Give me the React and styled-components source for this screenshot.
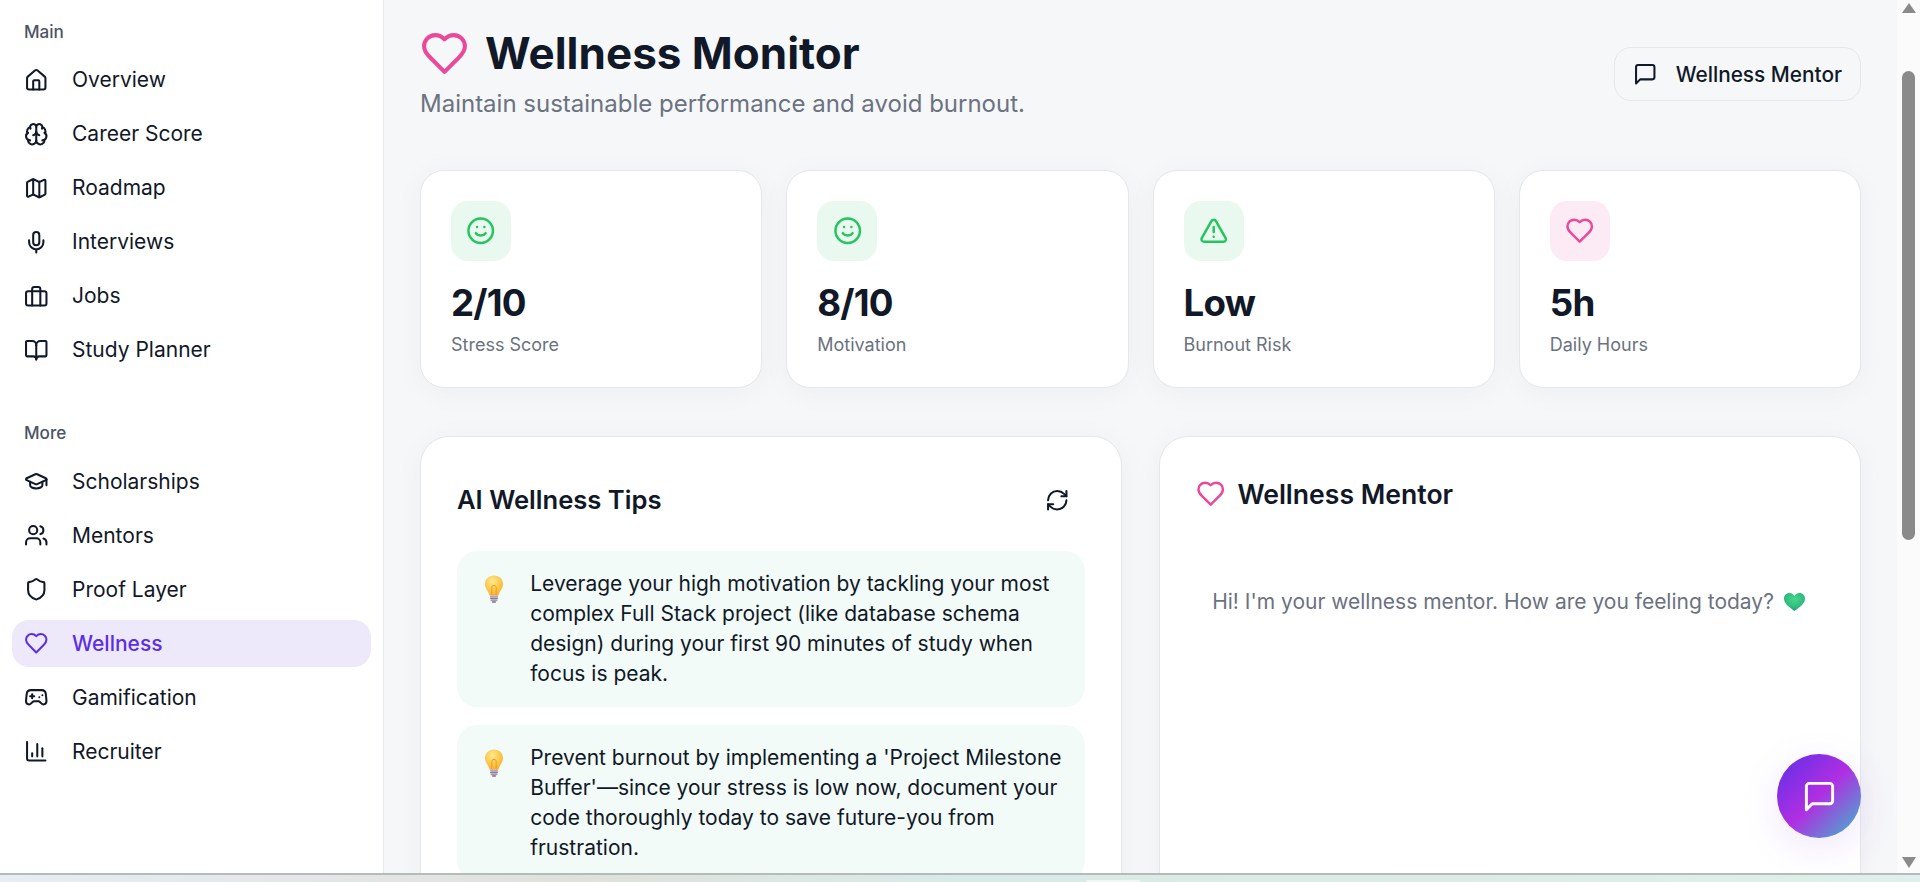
import styled, { createGlobalStyle } from "styled-components";
import {
  House,
  Brain,
  Map,
  Mic,
  BookOpen,
  GraduationCap,
  Users,
  Shield,
  Gamepad2,
  ChartColumn,
  Smile,
  TriangleAlert,
  RefreshCw,
} from "lucide-react";

const GlobalStyle = createGlobalStyle`
  html, body {
    margin: 0;
    padding: 0;
    height: 100%;
    overflow: hidden;
    background: #f6f7f9;
    font-family: "Inter", "Liberation Sans", sans-serif;
    color: #111827;
  }
  * { box-sizing: border-box; }
`;

// older lucide outlines, the package versions of these differ from the picture
const Heart = ({ size = 24, strokeWidth = 2 }) => (
  <svg width={size} height={size} viewBox="0 0 24 24" fill="none" stroke="currentColor" strokeWidth={strokeWidth} strokeLinecap="round" strokeLinejoin="round">
    <path d="M19 14c1.49-1.46 3-3.21 3-5.5A5.5 5.5 0 0 0 16.5 3c-1.76 0-3 .5-4.5 2-1.5-1.5-2.74-2-4.5-2A5.5 5.5 0 0 0 2 8.5c0 2.3 1.5 4.05 3 5.5l7 7Z" />
  </svg>
);

const Bubble = ({ size = 24 }) => (
  <svg width={size} height={size} viewBox="0 0 24 24" fill="none" stroke="currentColor" strokeWidth="2" strokeLinecap="round" strokeLinejoin="round">
    <path d="M21 15a2 2 0 0 1-2 2H7l-4 4V5a2 2 0 0 1 2-2h14a2 2 0 0 1 2 2z" />
  </svg>
);

const Briefcase = ({ size = 24 }) => (
  <svg width={size} height={size} viewBox="0 0 24 24" fill="none" stroke="currentColor" strokeWidth="2" strokeLinecap="round" strokeLinejoin="round">
    <rect x="2" y="7" width="20" height="14" rx="2" />
    <path d="M16 21V5a2 2 0 0 0-2-2h-4a2 2 0 0 0-2 2v16" />
  </svg>
);

const Bulb = () => (
  <svg width="20" height="28" viewBox="0 0 20 28">
    <defs>
      <radialGradient id="bulbGlass" cx="0.42" cy="0.3" r="0.75">
        <stop offset="0" stopColor="#ffe98a" />
        <stop offset="1" stopColor="#f9ae22" />
      </radialGradient>
    </defs>
    <path d="M10 0.500C4.800 0.500 1 4.300 1 9.200c0 4.300 3.400 6.500 4.600 11.300h8.800c1.200-4.800 4.600-7 4.600-11.300C19 4.300 15.200 0.500 10 0.500Z" fill="url(#bulbGlass)" />
    <path d="M7.800 20V12.500a2.200 2.200 0 0 1 4.400 0V20" fill="none" stroke="#ee9f1e" strokeWidth="1" />
    <rect x="6" y="20.500" width="8" height="1.800" rx="0.800" fill="#b3a3bd" />
    <rect x="6" y="22.600" width="8" height="1.800" rx="0.800" fill="#8f7d9c" />
    <rect x="6.500" y="24.700" width="7" height="1.600" rx="0.800" fill="#a999b3" />
    <rect x="8" y="26.300" width="4" height="1.500" rx="0.700" fill="#7d6c8a" />
  </svg>
);

const GreenHeart = () => (
  <svg width="21" height="18" viewBox="0 0 21 18">
    <defs>
      <radialGradient id="greenHeart" cx="0.5" cy="0.35" r="0.7">
        <stop offset="0" stopColor="#46d68c" />
        <stop offset="0.6" stopColor="#2fbf7c" />
        <stop offset="1" stopColor="#1c8f70" />
      </radialGradient>
    </defs>
    <path d="M10.500 18C6 14.800 0 10.900 0 5.600 0 2.300 2.500 0 5.400 0c2.200 0 4.100 1.200 5.100 3 1-1.800 2.900-3 5.100-3C18.500 0 21 2.300 21 5.600c0 5.300-6 9.200-10.500 12.400Z" fill="url(#greenHeart)" />
  </svg>
);

const mainLinks = [
  { label: "Overview", icon: <House size={24.5} /> },
  { label: "Career Score", icon: <Brain size={24.5} /> },
  { label: "Roadmap", icon: <Map size={24.5} /> },
  { label: "Interviews", icon: <Mic size={24.5} /> },
  { label: "Jobs", icon: <Briefcase size={24.5} /> },
  { label: "Study Planner", icon: <BookOpen size={24.5} /> },
];

const moreLinks = [
  { label: "Scholarships", icon: <GraduationCap size={24.5} /> },
  { label: "Mentors", icon: <Users size={24.5} /> },
  { label: "Proof Layer", icon: <Shield size={24.5} /> },
  { label: "Wellness", icon: <Heart size={24.5} />, active: true },
  { label: "Gamification", icon: <Gamepad2 size={24.5} /> },
  { label: "Recruiter", icon: <ChartColumn size={24.5} /> },
];

const stats = [
  { value: "2/10", label: "Stress Score", tone: "green", icon: <Smile size={29.4} /> },
  { value: "8/10", label: "Motivation", tone: "green", icon: <Smile size={29.4} /> },
  { value: "Low", label: "Burnout Risk", tone: "green", icon: <TriangleAlert size={29.4} /> },
  { value: "5h", label: "Daily Hours", tone: "pink", icon: <Heart size={29.4} /> },
];

const tips = [
  "Leverage your high motivation by tackling your most complex Full Stack project (like database schema design) during your first 90 minutes of study when focus is peak.",
  "Prevent burnout by implementing a 'Project Milestone Buffer'—since your stress is low now, document your code thoroughly today to save future-you from frustration.",
];

const App = () => {
  return (
    <Page>
      <GlobalStyle />
      <Shell>
        <Sidebar>
          <NavSection>
            <SectionLabel>Main</SectionLabel>
            <NavList>
              {mainLinks.map((link) => (
                <NavItem key={link.label} $active={link.active}>
                  {link.icon}
                  {link.label}
                </NavItem>
              ))}
            </NavList>
          </NavSection>
          <NavSection>
            <SectionLabel>More</SectionLabel>
            <NavList>
              {moreLinks.map((link) => (
                <NavItem key={link.label} $active={link.active}>
                  {link.icon}
                  {link.label}
                </NavItem>
              ))}
            </NavList>
          </NavSection>
        </Sidebar>

        <Main>
          <Header>
            <div>
              <TitleRow>
                <TitleIcon>
                  <Heart size={49} />
                </TitleIcon>
                <Title>Wellness Monitor</Title>
              </TitleRow>
              <Subtitle>Maintain sustainable performance and avoid burnout.</Subtitle>
            </div>
            <MentorButton>
              <Bubble size={24.5} />
              Wellness Mentor
            </MentorButton>
          </Header>

          <StatGrid>
            {stats.map((stat) => (
              <StatCard key={stat.label}>
                <StatIcon $tone={stat.tone}>{stat.icon}</StatIcon>
                <StatValue>{stat.value}</StatValue>
                <StatLabel>{stat.label}</StatLabel>
              </StatCard>
            ))}
          </StatGrid>

          <PanelGrid>
            <Panel>
              <PanelHeader>
                <PanelTitle>AI Wellness Tips</PanelTitle>
                <RefreshButton>
                  <RefreshCw size={24.5} />
                </RefreshButton>
              </PanelHeader>
              <TipList>
                {tips.map((tip) => (
                  <Tip key={tip}>
                    <TipIcon>
                      <Bulb />
                    </TipIcon>
                    <TipText>{tip}</TipText>
                  </Tip>
                ))}
              </TipList>
            </Panel>

            <Panel>
              <MentorHeader>
                <PinkIcon>
                  <Heart size={29.4} />
                </PinkIcon>
                <MentorTitle>Wellness Mentor</MentorTitle>
              </MentorHeader>
              <Greeting>
                Hi! I'm your wellness mentor. How are you feeling today?
                <GreenHeart />
              </Greeting>
            </Panel>
          </PanelGrid>

          <ChatFab>
            <Bubble size={35} />
          </ChatFab>
        </Main>

        <Scrollbar>
          <ArrowUp />
          <Thumb />
          <ArrowDown />
        </Scrollbar>
      </Shell>
      <DesktopStrip>
        <StripTab />
      </DesktopStrip>
    </Page>
  );
};

//Styled Components

const Page = styled.div`
  display: flex;
  flex-direction: column;
  width: 1920px;
  height: 882px;
  overflow: hidden;
`;

const Shell = styled.div`
  display: flex;
  height: 873px;
  flex-shrink: 0;
`;

const Sidebar = styled.aside`
  width: 384px;
  flex-shrink: 0;
  display: flex;
  flex-direction: column;
  gap: 48.5px;
  padding: 20.5px 12px 0;
  background: #ffffff;
  border-right: 1px solid #e8e9ee;
`;

const NavSection = styled.section`
  display: flex;
  flex-direction: column;
  gap: 14.5px;
`;

const SectionLabel = styled.div`
  padding-left: 12px;
  font-size: 17.1px;
  line-height: 21px;
  font-weight: 500;
  color: #4b5563;
`;

const NavList = styled.nav`
  display: flex;
  flex-direction: column;
  gap: 6.3px;
`;

const NavItem = styled.a`
  display: flex;
  align-items: center;
  gap: 23.5px;
  height: 47.7px;
  padding-left: 12px;
  border-radius: 17px;
  font-size: 21px;
  font-weight: ${(props) => (props.$active ? 500 : 400)};
  color: ${(props) => (props.$active ? "#5b2ee6" : "#111827")};
  background: ${(props) => (props.$active ? "#ede9fb" : "transparent")};
`;

const Main = styled.main`
  position: relative;
  flex: 1;
  min-width: 0;
  overflow: hidden;
  padding: 29px 36px 0;
  background: #f6f7f9;
`;

const Header = styled.header`
  display: flex;
  justify-content: space-between;
  align-items: flex-start;
`;

const TitleRow = styled.div`
  display: flex;
  align-items: center;
  gap: 16px;
  height: 48px;
`;

const TitleIcon = styled.span`
  display: flex;
  color: #ec4899;
`;

const Title = styled.h1`
  margin: 0;
  font-size: 44px;
  line-height: 48px;
  font-weight: 700;
  color: #111827;
`;

const Subtitle = styled.p`
  margin: 11px 0 0;
  font-size: 24px;
  line-height: 32px;
  color: #6b7280;
`;

const MentorButton = styled.button`
  display: flex;
  align-items: center;
  gap: 18.5px;
  height: 54px;
  margin-top: 18px;
  padding: 0 18px 0 18px;
  border: 1px solid #e5e7eb;
  border-radius: 17px;
  background: transparent;
  font-family: inherit;
  font-size: 20.8px;
  font-weight: 500;
  color: #111827;
`;

const StatGrid = styled.div`
  display: grid;
  grid-template-columns: repeat(4, 1fr);
  gap: 24px;
  margin-top: 50px;
`;

const StatCard = styled.div`
  height: 218px;
  padding: 30px;
  background: #ffffff;
  border: 1px solid #e5e7eb;
  border-radius: 24px;
  box-shadow: 0 4px 30px rgba(17, 24, 39, 0.04);
`;

const StatIcon = styled.div`
  display: flex;
  align-items: center;
  justify-content: center;
  width: 60px;
  height: 60px;
  border-radius: 17px;
  color: ${(props) => (props.$tone === "pink" ? "#ec4899" : "#22c55e")};
  background: ${(props) => (props.$tone === "pink" ? "#fcebf4" : "#e9f9ef")};
`;

const StatValue = styled.div`
  margin-top: 20px;
  font-size: 36.7px;
  line-height: 44px;
  font-weight: 700;
  letter-spacing: -0.8px;
  color: #111827;
`;

const StatLabel = styled.div`
  margin-top: 8px;
  font-size: 18px;
  line-height: 24px;
  color: #6b7280;
`;

const PanelGrid = styled.div`
  display: grid;
  grid-template-columns: 1fr 1fr;
  gap: 37px;
  margin-top: 48px;
`;

const Panel = styled.section`
  min-height: 600px;
  padding: 36px;
  background: #ffffff;
  border: 1px solid #e5e7eb;
  border-radius: 29px;
  box-shadow: 0 4px 30px rgba(17, 24, 39, 0.04);
`;

const PanelHeader = styled.div`
  display: flex;
  justify-content: space-between;
  align-items: center;
  height: 54px;
  padding-right: 16px;
  margin-bottom: 24px;
`;

const PanelTitle = styled.h3`
  margin: 0;
  font-size: 25.6px;
  line-height: 32px;
  font-weight: 600;
  color: #111827;
`;

const MentorTitle = styled(PanelTitle)`
  font-size: 26.6px;
`;

const RefreshButton = styled.span`
  display: flex;
  color: #111827;
`;

const TipList = styled.div`
  display: flex;
  flex-direction: column;
  gap: 18px;
`;

const Tip = styled.div`
  display: flex;
  gap: 19.6px;
  padding: 18px 19.6px;
  background: #f2fbf7;
  border-radius: 20px;
`;

const TipIcon = styled.span`
  display: flex;
  justify-content: center;
  width: 34px;
  flex-shrink: 0;
  padding-top: 6px;
`;

const TipText = styled.p`
  margin: 0;
  font-size: 21px;
  line-height: 30px;
  color: #111827;
`;

const MentorHeader = styled.div`
  display: flex;
  align-items: center;
  gap: 12px;
  padding-top: 5px;
  margin-bottom: 77px;
`;

const PinkIcon = styled.span`
  display: flex;
  color: #ec4899;
`;

const Greeting = styled.p`
  display: flex;
  align-items: center;
  justify-content: center;
  gap: 10px;
  margin: 0;
  padding-right: 3px;
  font-size: 21px;
  line-height: 30px;
  white-space: nowrap;
  color: #6b7280;
`;

const ChatFab = styled.button`
  position: absolute;
  top: 754px;
  right: 36px;
  display: flex;
  align-items: center;
  justify-content: center;
  width: 84px;
  height: 84px;
  border: none;
  border-radius: 50%;
  color: #ffffff;
  background: linear-gradient(135deg, #5b30e8 0%, #b02ee2 50%, #45b0cc 95%);
  box-shadow: 0 10px 40px rgba(124, 58, 237, 0.12);
`;

const Scrollbar = styled.div`
  display: flex;
  flex-direction: column;
  align-items: center;
  width: 23px;
  flex-shrink: 0;
  padding-top: 3px;
  background: #fbfbfb;
`;

const ArrowUp = styled.span`
  width: 0;
  height: 0;
  border-left: 7px solid transparent;
  border-right: 7px solid transparent;
  border-bottom: 10px solid #8a8a8a;
`;

const Thumb = styled.span`
  width: 13px;
  height: 469px;
  margin-top: 58px;
  border-radius: 7px;
  background: #8a8a8a;
`;

const ArrowDown = styled.span`
  width: 0;
  height: 0;
  margin-top: auto;
  margin-bottom: 5px;
  border-left: 7px solid transparent;
  border-right: 7px solid transparent;
  border-top: 11px solid #8a8a8a;
`;

const DesktopStrip = styled.div`
  position: relative;
  flex: 1;
  border-top: 2px solid #b3bcb8;
  background: linear-gradient(90deg, #e7edf3 0%, #dfe1dc 30%, #d9ebe7 50%, #dcebe5 75%, #dff0ec 100%);
`;

const StripTab = styled.span`
  position: absolute;
  left: 1086px;
  bottom: 0;
  width: 54px;
  height: 2px;
  border-radius: 2px 2px 0 0;
  background: #f2f5f5;
`;

export default App;
